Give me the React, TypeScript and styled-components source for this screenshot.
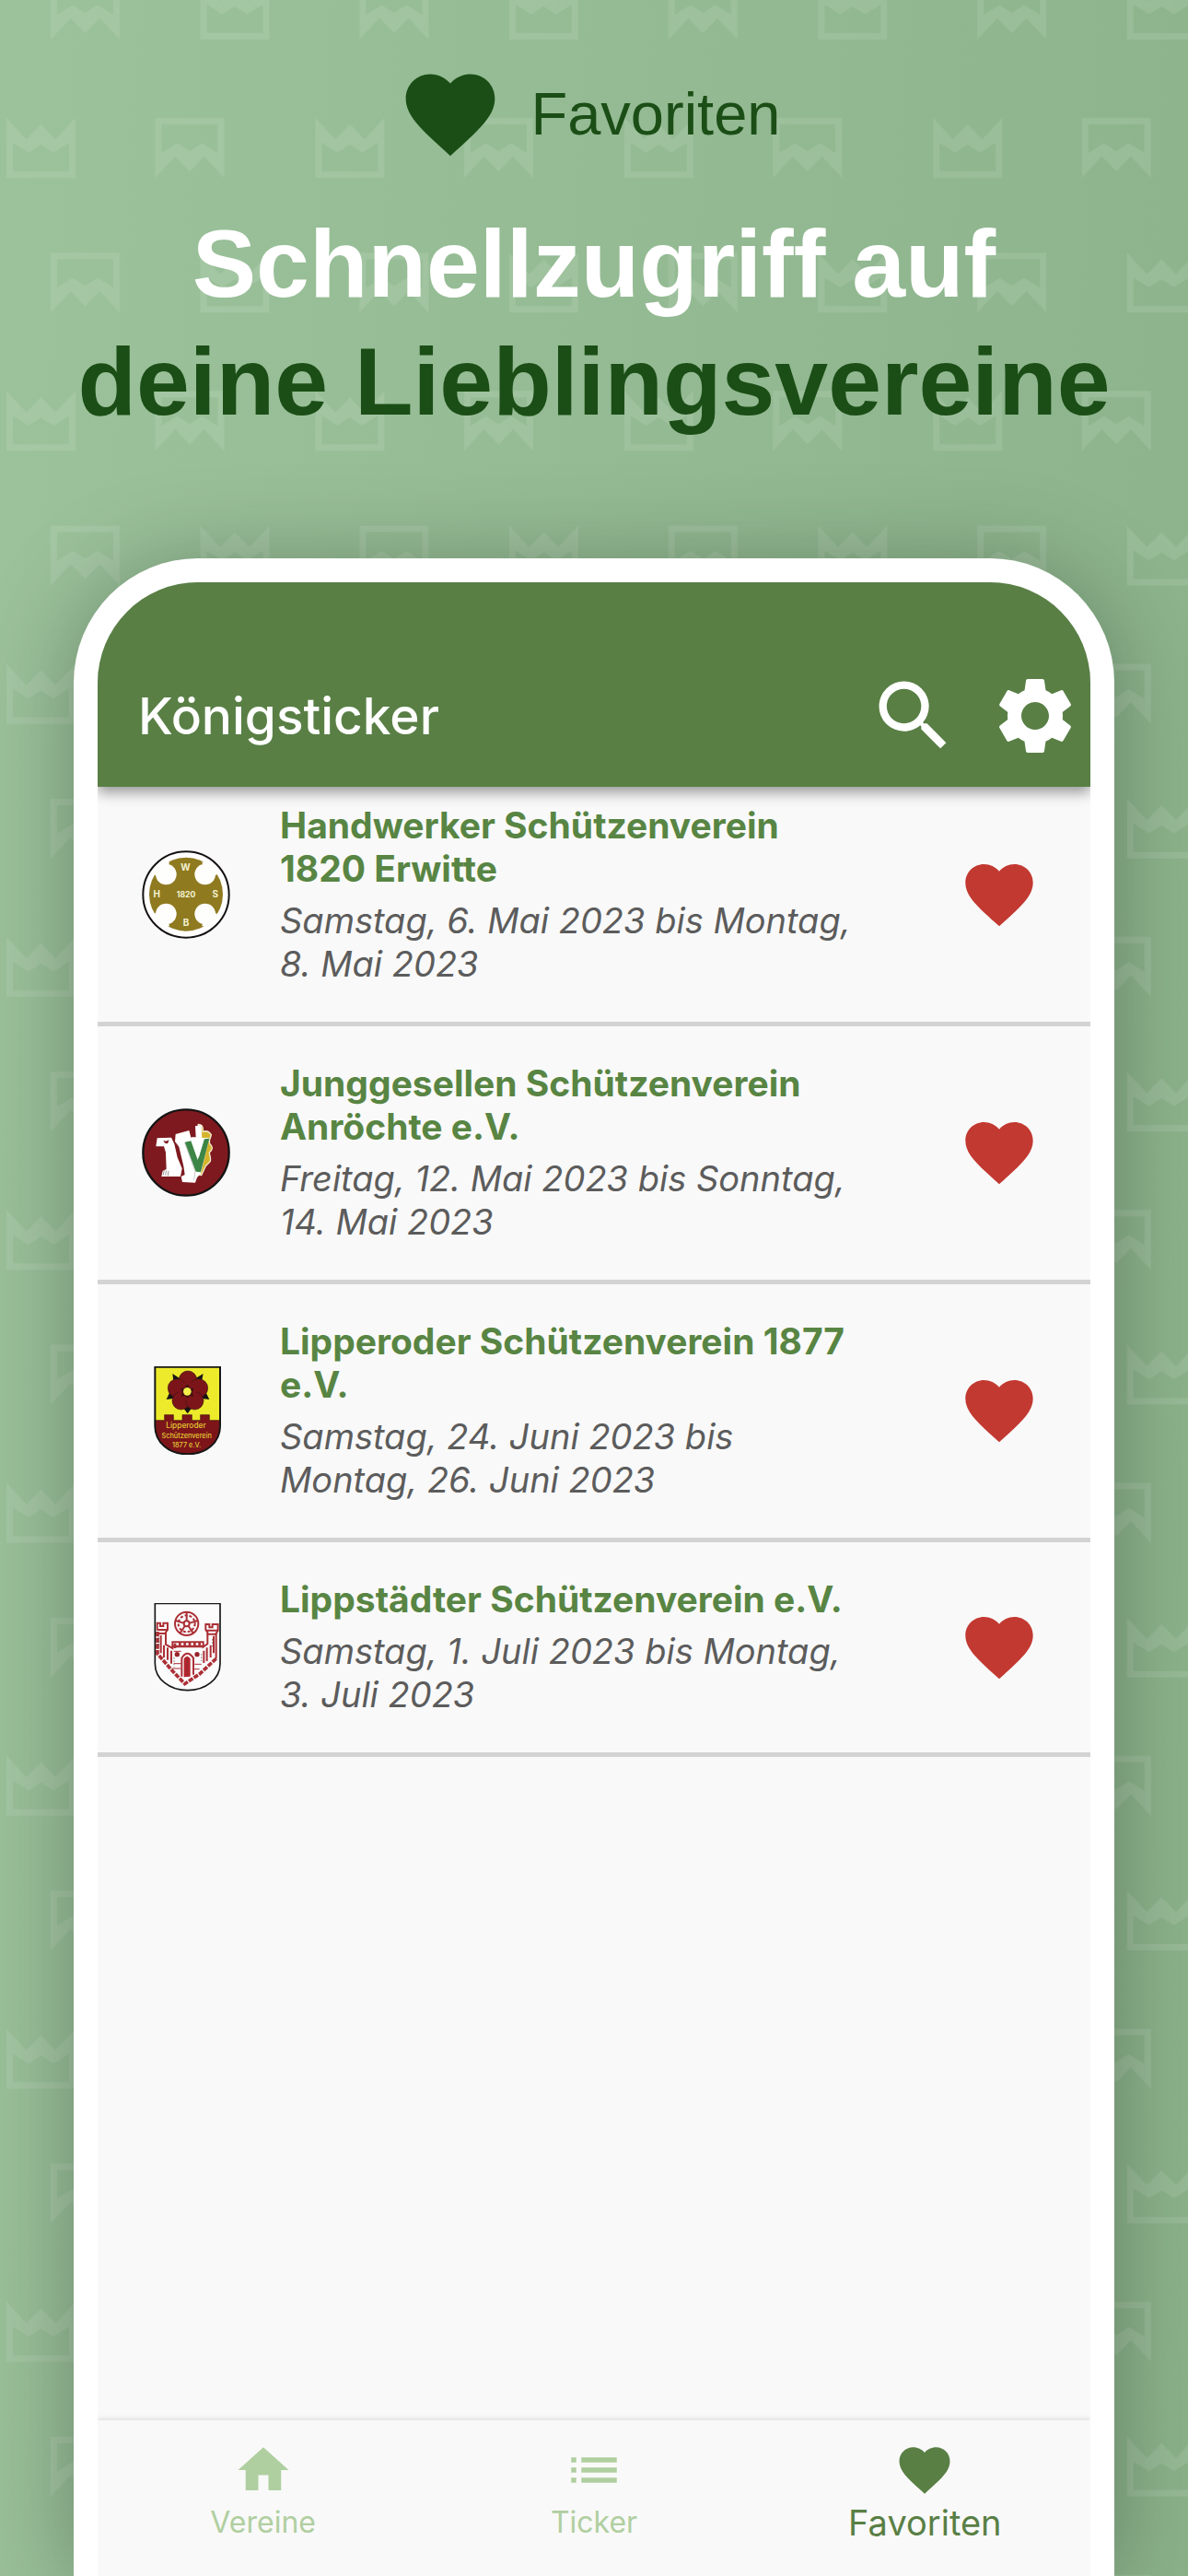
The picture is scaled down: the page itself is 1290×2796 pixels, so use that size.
import React from "react";
import styled, { createGlobalStyle } from "styled-components";
import { MdFavorite, MdHome, MdList, MdSearch, MdSettings } from "react-icons/md";

const color = {
  forest: "#1b4e16",
  bar: "#597f45",
  title: "#588543",
  muted: "#5c5c5c",
  pale: "#b0cfa0",
  heart: "#c23931",
  surface: "#f9f9f9",
  divider: "#d3d3d3",
};

const GlobalStyle = createGlobalStyle`
  *, *::before, *::after { box-sizing: border-box; }
  body { margin: 0; font-family: Inter, "Noto Sans", sans-serif; }
  h1, h2, p, ul { margin: 0; padding: 0; }
  ul { list-style: none; }
  button { border: 0; padding: 0; background: none; color: inherit; cursor: pointer; }
  svg { display: block; }
`;

const Page = styled.div`
  position: relative;
  isolation: isolate;
  display: flex;
  flex-direction: column;
  min-height: 100vh;
  overflow: hidden;
  background: linear-gradient(94deg, #9cc29b, #8bb28a);
`;

const Backdrop = styled.svg`
  position: absolute;
  inset: 0;
  z-index: -1;
  width: 100%;
  height: 100%;
`;

const Hero = styled.header`
  display: flex;
  flex-direction: column;
  align-items: center;
  gap: 40px;
  padding: 66px 24px 128px;
  font-family: "Liberation Sans", Arial, sans-serif;
  color: ${color.forest};
`;

const HeroTopic = styled.p`
  display: flex;
  align-items: center;
  gap: 30px;
  padding-right: 12px;
  font-size: 65px;
  line-height: 80px;
`;

const Headline = styled.h1`
  font-size: 104px;
  font-weight: 700;
  line-height: 128px;
  text-align: center;
`;

const HeadlineLine = styled.span<{ $light?: boolean }>`
  display: block;
  color: ${(p) => (p.$light ? "#fff" : color.forest)};
`;

const Phone = styled.main`
  flex: 1;
  display: flex;
  flex-direction: column;
  margin: 0 80px;
  border: 26px solid #fff;
  border-bottom: 0;
  border-radius: 135px 135px 0 0;
  background: #fff;
  box-shadow: 0 10px 100px rgba(20, 30, 20, 0.34);
`;

const Screen = styled.div`
  flex: 1;
  display: flex;
  flex-direction: column;
  overflow: hidden;
  border-radius: 109px 109px 0 0;
  background: ${color.surface};
`;

const AppBar = styled.div`
  position: relative;
  z-index: 1;
  display: flex;
  align-items: center;
  gap: 32px;
  padding: 95px 10px 27px 44px;
  background: ${color.bar};
  color: #fff;
  box-shadow: 0 6px 14px rgba(0, 0, 0, 0.4);
`;

const AppTitle = styled.h2`
  flex: 1;
  font-size: 55px;
  font-weight: 500;
  line-height: 64px;
`;

const IconButton = styled.button<{ $color?: string }>`
  display: grid;
  place-items: center;
  color: ${(p) => p.$color ?? "inherit"};
`;

/* The list is scrolled a little way beneath the app bar. */
const ClubList = styled.ul`
  flex: 1;
  margin-top: -20px;
`;

const ClubRow = styled.li`
  display: grid;
  grid-template-columns: 96px 1fr 88px;
  align-items: center;
  column-gap: 54px;
  padding: 38px 55px 39px 48px;
  border-bottom: 5px solid ${color.divider};
`;

const ClubText = styled.div`
  display: grid;
  row-gap: 10px;
  padding-right: 48px;
  line-height: 47px;
`;

const ClubName = styled.h2`
  font-size: 39px;
  font-weight: 700;
  line-height: inherit;
  color: ${color.title};
`;

const ClubDate = styled.p`
  font-size: 38px;
  font-style: italic;
  color: ${color.muted};
`;

const TabBar = styled.nav`
  display: grid;
  grid-template-columns: repeat(3, 1fr);
  padding: 21px 0 36px;
  background: ${color.surface};
  box-shadow: 0 -2px 5px rgba(0, 0, 0, 0.1);
`;

const Tab = styled.a<{ $active?: boolean }>`
  display: flex;
  flex-direction: column;
  align-items: center;
  gap: 2px;
  font-size: ${(p) => (p.$active ? 38 : 32)}px;
  line-height: 44px;
  text-decoration: none;
  color: ${(p) => (p.$active ? color.bar : color.pale)};
`;

const Emblem = styled.svg`
  width: 96px;
  height: 96px;
  font-family: Inter, sans-serif;
  font-weight: 700;
`;

const crown =
  "M0 0L21.7 23.3 37.5 7 53.3 23.3 75 0V65H0ZM7 27V58H68V27L51 37.5 37.5 29 24 37.5Z";

function CrownPattern() {
  return (
    <Backdrop aria-hidden="true">
      <defs>
        <pattern id="crowns" width="335.4" height="296.3" patternUnits="userSpaceOnUse">
          <g fill="#fff" fillOpacity="0.1" fillRule="evenodd">
            <path d={crown} transform="translate(7 128)" />
            <path d={crown} transform="translate(243.5 193) rotate(180)" />
            <path d={crown} transform="translate(130 43) rotate(180)" />
            <path d={crown} transform="translate(130 339.3) rotate(180)" />
            <path d={crown} transform="translate(217.5 -22)" />
            <path d={crown} transform="translate(217.5 274.3)" />
          </g>
        </pattern>
      </defs>
      <rect width="100%" height="100%" fill="url(#crowns)" />
    </Backdrop>
  );
}

function ErwitteEmblem() {
  return (
    <Emblem viewBox="42 40 288 288" role="img" aria-label="Wappen Erwitte">
      <circle cx="186" cy="184" r="140" fill="#fff" />
      <circle cx="186" cy="183" r="120" fill="#8f7a20" />
      <g fill="#fefefc">
        <circle cx="121" cy="118" r="34" />
        <circle cx="248" cy="118" r="34" />
        <circle cx="121" cy="247" r="34" />
        <circle cx="248" cy="247" r="34" />
        <path d="M121 118L84 120 82 110 112 76 132 78ZM248 118L238 78 258 76 288 110 286 120ZM121 247L84 245 82 255 112 292 132 286ZM248 247L286 245 288 255 258 292 238 286Z" />
      </g>
      <circle cx="186" cy="184" r="140" fill="none" stroke="#161212" strokeWidth="6" />
      <g fill="#f4f2d2" fontSize="30" textAnchor="middle">
        <text x="184" y="105">W</text>
        <text x="91" y="194">H</text>
        <text x="281" y="194">S</text>
        <text x="186" y="286">B</text>
        <text x="186" y="193" fontSize="26">1820</text>
      </g>
    </Emblem>
  );
}

function AnroechteEmblem() {
  return (
    <Emblem viewBox="42 40 288 288" role="img" aria-label="Wappen Anröchte">
      <circle cx="186" cy="184" r="140" fill="#7e1a1f" stroke="#141414" strokeWidth="7" />
      <path
        d="M226 92C240 92 242 104 241 116 252 112 262 116 268 126 266 138 258 146 264 156 274 164 274 174 262 184 262 192 268 202 265 212 262 220 250 224 248 232L236 258 224 254Z"
        fill="#d5b32b"
        stroke="#f3ecd0"
        strokeWidth="4"
      />
      <g fill="#fff">
        <path d="M88 164L92 137 138 135 148 156 158 200 173 236 168 262 106 262 110 244 122 238 120 184 114 164Z" />
        <path d="M152 124L196 112 206 150 216 246 223 262 216 282 174 280 170 262 182 256 178 228 163 165 150 148Z" />
        <path d="M203 134L218 134 216 98 236 94 238 136 262 136 234 254 216 270 198 146Z" />
      </g>
      <path d="M112 144l8 3 11-4-5 12-9-2Z" fill="#7e1a1f" />
      <path d="M111 258l4-16M119 258l3-16M127 260l2-16" stroke="#999" strokeWidth="3" />
      <path d="M182 150L202 146 224 208 244 140 262 138 234 248 218 246Z" fill="#3d8546" />
      <path d="M226 142L246 138 227 202 218 172Z" fill="#fff" />
      <path d="M182 152L216 246 212 274" fill="none" stroke="#aaa" strokeWidth="2" />
    </Emblem>
  );
}

const roundShield = "M85 40H297V232C297 286 252 324 191 324S85 286 85 232Z";
const tallShield = "M85 44H297V240C297 290 250 327 191 327S85 290 85 240Z";

function LipperodeEmblem() {
  return (
    <Emblem viewBox="42 38 288 288" role="img" aria-label="Wappen Lipperode">
      <path d={roundShield} fill="#ecea2b" />
      <path
        d="M85 214H116V196H145V214H174V196H205V214H233V196H262V214H297V232C297 286 252 324 191 324S85 286 85 232Z"
        fill="#7c1519"
        stroke="#3c1210"
        strokeWidth="2"
      />
      <path
        d="M142 62L166 78 216 78 242 62 236 92 262 146 232 142 206 172 191 192 176 172 150 142 122 146 146 94Z"
        fill="#161616"
      />
      <g fill="#7c1519" stroke="#3c1210" strokeWidth="2">
        <circle cx="192" cy="82" r="29" />
        <circle cx="157" cy="109" r="30" />
        <circle cx="227" cy="109" r="30" />
        <circle cx="170" cy="150" r="29" />
        <circle cx="214" cy="150" r="29" />
      </g>
      <circle cx="191" cy="120" r="30" fill="#7c1519" />
      <path d="M191 96l7 12 14 2-6 12 5 14-13-2-8 8-7-8-13 2 4-14-6-12 14-2Z" fill="#421110" />
      <circle cx="190" cy="120" r="13" fill="#f3ef4a" />
      <g fill="#e2c936" fontSize="22" fontWeight="500" textAnchor="middle">
        <text x="186" y="239" fontSize="25">Lipperoder</text>
        <text x="188" y="271">Schützenverein</text>
        <text x="188" y="301">1877 e.V.</text>
      </g>
      <path d={roundShield} fill="none" stroke="#171717" strokeWidth="6" />
    </Emblem>
  );
}

function LippstadtEmblem() {
  return (
    <Emblem viewBox="42 43 288 288" role="img" aria-label="Wappen Lippstadt">
      <path d={tallShield} fill="#fcfcfc" />
      <g fill="none" stroke="#ab3036" strokeWidth="6">
        <circle cx="188" cy="110" r="38" />
        <circle cx="188" cy="110" r="27" strokeDasharray="9 6" />
        <circle cx="188" cy="110" r="9" />
        <path d="M188 72V100M152 100L178 108M224 100L198 108M166 142L182 118M210 142L194 118" />
        <path d="M92 132V108H102V118H112V108H126V130L120 138V178L142 190V170H242V186L256 176V138L250 130V112H262V122H272V112H290V132L284 142V224" />
        <path d="M93 136V208L140 262 182 306 230 274 286 222" strokeWidth="11" strokeDasharray="16 4" />
        <path d="M94 130H124M94 142H122M252 132H288M254 144H286M104 148V206M114 180V220M126 188V228M138 198V240M276 150V206M266 180V220M254 188V232M244 198V238" />
        <path d="M140 184H242M150 174V190M166 172V188M182 172V188M198 172V188M214 172V188M230 172V188" strokeWidth="8" />
        <path d="M146 200H170M146 240H170M140 256H168M214 242H236M212 258H230" strokeWidth="3" />
        <path d="M172 282V222Q190 192 210 222V276" />
      </g>
      <path d="M179 284V224Q190 208 200 224V282Z" fill="#b5262e" />
      <g fill="#97252c">
        <circle cx="157" cy="210" r="8" />
        <circle cx="222" cy="210" r="8" />
      </g>
      <path
        d="M97 156V184M147 220V252M236 208V232M272 160V190M190 222V276"
        stroke="#4a4040"
        strokeWidth="2"
        strokeDasharray="5 5"
      />
      <path d={tallShield} fill="none" stroke="#171717" strokeWidth="5" />
    </Emblem>
  );
}

const clubs = [
  {
    name: "Handwerker Schützenverein 1820 Erwitte",
    date: "Samstag, 6. Mai 2023 bis Montag, 8. Mai 2023",
    Logo: ErwitteEmblem,
  },
  {
    name: "Junggesellen Schützenverein Anröchte e.V.",
    date: "Freitag, 12. Mai 2023 bis Sonntag, 14. Mai 2023",
    Logo: AnroechteEmblem,
  },
  {
    name: "Lipperoder Schützenverein 1877 e.V.",
    date: "Samstag, 24. Juni 2023 bis Montag, 26. Juni 2023",
    Logo: LipperodeEmblem,
  },
  {
    name: "Lippstädter Schützenverein e.V.",
    date: "Samstag, 1. Juli 2023 bis Montag, 3. Juli 2023",
    Logo: LippstadtEmblem,
  },
];

const tabs = [
  { label: "Vereine", Icon: MdHome },
  { label: "Ticker", Icon: MdList },
  { label: "Favoriten", Icon: MdFavorite, active: true },
];

export default function App() {
  return (
    <Page>
      <GlobalStyle />
      <CrownPattern />
      <Hero>
        <HeroTopic>
          <MdFavorite size={116} aria-hidden="true" />
          Favoriten
        </HeroTopic>
        <Headline>
          <HeadlineLine $light>Schnellzugriff auf</HeadlineLine>
          <HeadlineLine>deine Lieblingsvereine</HeadlineLine>
        </Headline>
      </Hero>
      <Phone>
        <Screen>
          <AppBar>
            <AppTitle>Königsticker</AppTitle>
            <IconButton type="button" aria-label="Suchen">
              <MdSearch size={100} />
            </IconButton>
            <IconButton type="button" aria-label="Einstellungen">
              <MdSettings size={100} />
            </IconButton>
          </AppBar>
          <ClubList>
            {clubs.map(({ name, date, Logo }) => (
              <ClubRow key={name}>
                <Logo />
                <ClubText>
                  <ClubName>{name}</ClubName>
                  <ClubDate>{date}</ClubDate>
                </ClubText>
                <IconButton
                  type="button"
                  $color={color.heart}
                  aria-label={`${name} aus Favoriten entfernen`}
                >
                  <MdFavorite size={88} />
                </IconButton>
              </ClubRow>
            ))}
          </ClubList>
          <TabBar aria-label="Hauptnavigation">
            {tabs.map(({ label, Icon, active }) => (
              <Tab
                key={label}
                href={`#${label.toLowerCase()}`}
                $active={active}
                aria-current={active ? "page" : undefined}
              >
                <Icon size={66} aria-hidden="true" />
                {label}
              </Tab>
            ))}
          </TabBar>
        </Screen>
      </Phone>
    </Page>
  );
}
